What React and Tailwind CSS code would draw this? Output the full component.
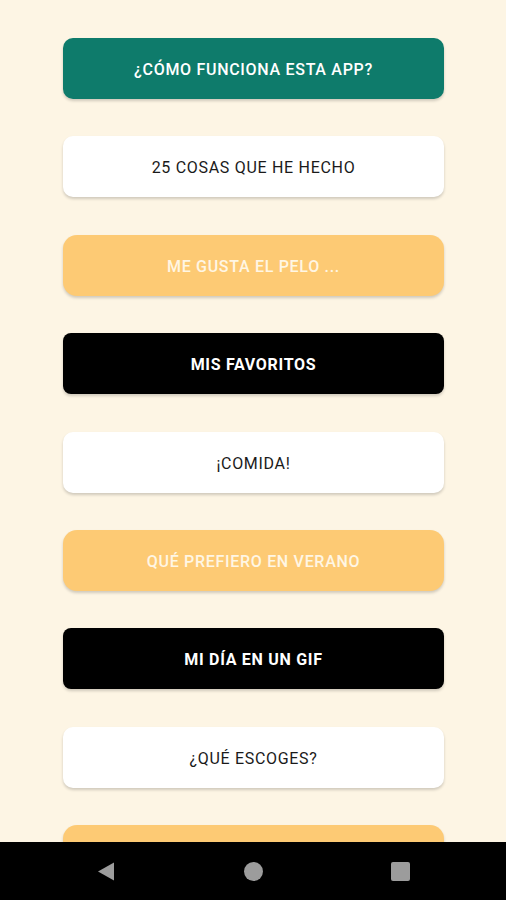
import React from "react";

const items = [
    { label: "¿CÓMO FUNCIONA ESTA APP?", style: "bg-[#0e7b6b] text-white font-medium rounded-[10px]" },
    { label: "25 COSAS QUE HE HECHO", style: "bg-white text-[#1a1a1a] font-normal rounded-[10px]" },
    { label: "ME GUSTA EL PELO ...", style: "bg-[#fdca74] text-[#fff6e4] font-medium rounded-[14px]" },
    { label: "MIS FAVORITOS", style: "bg-black text-white font-bold rounded-[8px]" },
    { label: "¡COMIDA!", style: "bg-white text-[#1a1a1a] font-normal rounded-[10px]" },
    { label: "QUÉ PREFIERO EN VERANO", style: "bg-[#fdca74] text-[#fff6e4] font-medium rounded-[14px]" },
    { label: "MI DÍA EN UN GIF", style: "bg-black text-white font-bold rounded-[8px]" },
    { label: "¿QUÉ ESCOGES?", style: "bg-white text-[#1a1a1a] font-normal rounded-[10px]" },
    { label: "", style: "bg-[#fdca74] text-[#fff6e4] font-medium rounded-[14px]" },
];

const App = () => {
    return (
        <div className="w-[506px] h-[900px] flex flex-col bg-[#fdf5e4] overflow-hidden font-['Roboto',sans-serif]">
            <div className="flex-1 overflow-hidden">
                <div className="flex flex-col gap-[37.4px] pt-[38px] px-[63px] pr-[62px]">
                    {items.map((item, idx) => (
                        <button
                            key={idx}
                            className={`h-[61px] w-full shrink-0 flex items-center justify-center pt-[3px] text-[16px] tracking-[0.7px] shadow-[0_2px_3px_rgba(0,0,0,0.18)] ${item.style}`}
                        >
                            {item.label}
                        </button>
                    ))}
                </div>
            </div>
            <div className="h-[58px] bg-black flex items-center justify-between px-[97px] pr-[96px]">
                <svg width="18" height="19" viewBox="0 0 18 19">
                    <polygon points="17,0.5 17,18.5 1,9.5" fill="#9c9c9c" />
                </svg>
                <div className="w-[19px] h-[19px] rounded-full bg-[#9c9c9c]" />
                <div className="w-[19px] h-[19px] rounded-[2px] bg-[#9c9c9c]" />
            </div>
        </div>
    );
};

export default App;
